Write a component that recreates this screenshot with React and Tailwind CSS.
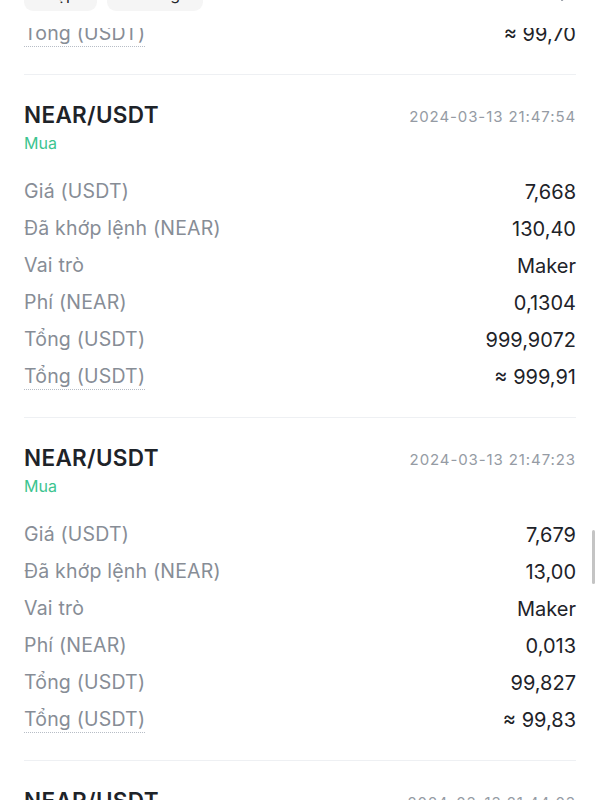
const trades = [
  {
    pair: "NEAR/USDT",
    time: "2024-03-13 21:47:54",
    side: "Mua",
    rows: [
      ["Giá (USDT)", "7,668"],
      ["Đã khớp lệnh (NEAR)", "130,40"],
      ["Vai trò", "Maker"],
      ["Phí (NEAR)", "0,1304"],
      ["Tổng (USDT)", "999,9072"],
      ["Tổng (USDT)", "≈ 999,91", true],
    ],
  },
  {
    pair: "NEAR/USDT",
    time: "2024-03-13 21:47:23",
    side: "Mua",
    rows: [
      ["Giá (USDT)", "7,679"],
      ["Đã khớp lệnh (NEAR)", "13,00"],
      ["Vai trò", "Maker"],
      ["Phí (NEAR)", "0,013"],
      ["Tổng (USDT)", "99,827"],
      ["Tổng (USDT)", "≈ 99,83", true],
    ],
  },
  {
    pair: "NEAR/USDT",
    time: "2024-03-13 21:44:03",
    side: "Mua",
    rows: [],
  },
];

function Row({ label, value, dotted }) {
  return (
    <div className="h-[37px] flex items-center justify-between">
      <span
        className={`text-[19.5px] text-[#878d96] leading-none tracking-[0.01em] ${
          dotted ? "border-b border-dotted border-[#b7bdc6] pb-[3px] mt-[4px]" : ""
        }`}
      >
        {label}
      </span>
      <span className="text-[20px] text-[#1e2329] leading-none">{value}</span>
    </div>
  );
}

function TradeCard({ trade }) {
  return (
    <div className="border-t border-[#eef0f3] pt-[25px] pb-[22px]">
      <div className="flex items-center justify-between h-[30px]">
        <span className="text-[22.5px] font-semibold text-[#1e2329] tracking-[0.015em]">{trade.pair}</span>
        <span className="text-[15px] text-[#959ba4] tracking-[0.06em] mt-[4px]">{trade.time}</span>
      </div>
      <div className="h-[22px] mt-[2px] flex items-center text-[16px] text-[#3cc48f]">{trade.side}</div>
      <div className="mt-[19px]">
        {trade.rows.map((r, i) => (
          <Row key={i} label={r[0]} value={r[1]} dotted={r[2]} />
        ))}
      </div>
    </div>
  );
}

export default function App() {
  return (
    <div
      className="relative h-[800px] overflow-hidden bg-white"
      style={{ fontFamily: "Inter, 'Noto Sans', sans-serif" }}
    >
      <div className="absolute top-0 left-0 right-0 z-10 h-[28px] bg-white px-6">
        <div className="-mt-[23px] flex items-center gap-[10px]">
          <div className="h-[34px] w-[73px] rounded-[9px] bg-[#f5f5f5] flex items-center justify-center text-[16px] text-[#1e2329]">
            Cặp
          </div>
          <div className="h-[34px] w-[96px] rounded-[9px] bg-[#f5f5f5] flex items-center justify-center text-[16px] text-[#1e2329]">
            Hướng
          </div>
          <svg className="ml-auto mr-[4px] w-[14px] h-[16px] text-[#8f959e]" viewBox="0 0 14 16" fill="none" stroke="currentColor" strokeWidth={2} strokeLinecap="round">
            <path d="M4 2l6 6-6 6" />
          </svg>
        </div>
      </div>

      <div className="px-6 pt-[15px]">
        <div className="pb-[22px]">
          <Row label="Tổng (USDT)" value="≈ 99,70" dotted />
        </div>
        {trades.map((t, i) => (
          <TradeCard key={i} trade={t} />
        ))}
      </div>

      {/* scrollbar */}
      <div className="absolute right-[5px] top-[530px] w-[3px] h-[54px] rounded-full bg-[#c4c4c4]" />
    </div>
  );
}
